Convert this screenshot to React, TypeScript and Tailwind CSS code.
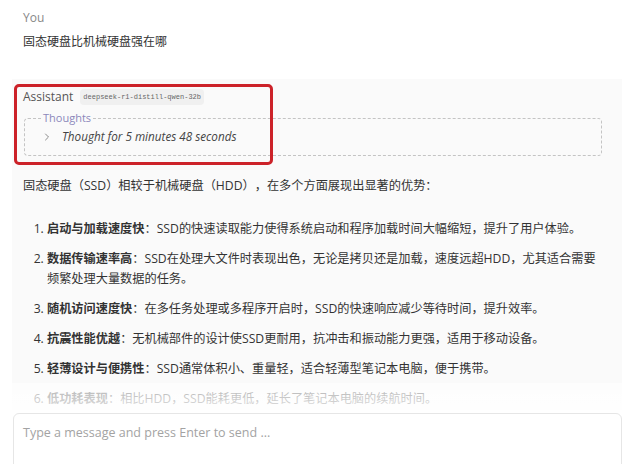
import { ChevronRight } from "lucide-react";

const font = { fontFamily: '"Open Sans", "Noto Sans CJK SC", sans-serif' };

export default function App() {
  const points = [
    {
      title: "启动与加载速度快",
      text: "SSD的快速读取能力使得系统启动和程序加载时间大幅缩短，提升了用户体验。",
    },
    {
      title: "数据传输速率高",
      text: "SSD在处理大文件时表现出色，无论是拷贝还是加载，速度远超HDD，尤其适合需要频繁处理大量数据的任务。",
    },
    {
      title: "随机访问速度快",
      text: "在多任务处理或多程序开启时，SSD的快速响应减少等待时间，提升效率。",
    },
    {
      title: "抗震性能优越",
      text: "无机械部件的设计使SSD更耐用，抗冲击和振动能力更强，适用于移动设备。",
    },
    {
      title: "轻薄设计与便携性",
      text: "SSD通常体积小、重量轻，适合轻薄型笔记本电脑，便于携带。",
    },
    {
      title: "低功耗表现",
      text: "相比HDD，SSD能耗更低，延长了笔记本电脑的续航时间。",
    },
  ];

  return (
    <div
      className="h-[464px] w-[640px] overflow-hidden bg-white flex flex-col text-[#333] [text-spacing-trim:space-all]"
      style={font}
    >
      <div className="relative h-[410px] shrink-0 overflow-hidden pl-3 pr-[18px]">
        <div className="px-[11px] pt-[10px] pb-[27px]">
          <div className="text-[12px] leading-4 text-[#888]">You</div>
          <div className="mt-[6px] text-[12px] leading-5">固态硬盘比机械硬盘强在哪</div>
        </div>

        <div className="relative bg-[#fafafa] pl-[11px] pr-[22px] pt-2 pb-6">
          <div className="flex items-center gap-[7px] h-5">
            <span className="text-[12px] text-[#555]">Assistant</span>
            <span className="rounded bg-[#f0f0f0] px-[3px] py-[3px] font-mono text-[7px] leading-[10px] text-[#666]">
              deepseek-r1-distill-qwen-32b
            </span>
          </div>

          <fieldset className="mt-[3px] ml-px mr-[-2px] rounded border border-dashed border-[#c4c4c4] px-4 pb-2 pt-px">
            <legend className="px-[2px] text-[11px] leading-4 text-[#8c88bb]">Thoughts</legend>
            <div className="flex items-center gap-[9px] h-5">
              <ChevronRight size={12} strokeWidth={1.5} className="text-[#666]" />
              <span className="italic text-[11.7px] text-[#444]">Thought for 5 minutes 48 seconds</span>
            </div>
          </fieldset>

          <p className="mt-5 text-[12.2px] leading-5">
            固态硬盘（SSD）相较于机械硬盘（HDD），在多个方面展现出显著的优势：
          </p>

          <ol className="mt-[23px] list-decimal pl-6 text-[12.2px] leading-5 space-y-[10px]">
            {points.map((p) => (
              <li key={p.title}>
                <b className="font-bold">{p.title}</b>：{p.text}
              </li>
            ))}
          </ol>

          <div className="absolute left-[2px] top-[5px] h-[81px] w-[259px] rounded-[5px] border-[3px] border-[#cc2229]" />
        </div>

        <div className="absolute bottom-0 left-0 right-0 h-[27px] bg-gradient-to-b from-white/60 to-white/85" />
      </div>

      <div className="pl-[13px] pr-[18px] pt-[3px]">
        <div className="h-[60px] rounded-md border border-[#e6e6e6] px-[9px] pt-[9px] text-[12.5px] leading-5 text-[#a3a3a3]">
          Type a message and press Enter to send ...
        </div>
      </div>
    </div>
  );
}
